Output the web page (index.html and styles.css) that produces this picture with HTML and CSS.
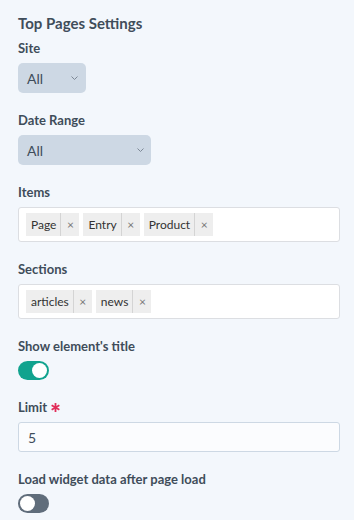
FILE: index.html
```html
<!DOCTYPE html>
<html>
<head>
<meta charset="utf-8">
<link rel="stylesheet" href="styles.css">
</head>
<body>
<div class="panel">
  <h2 class="title">Top Pages Settings</h2>

  <div class="field">
    <div class="label">Site</div>
    <div class="select site"><span>All</span><svg class="chev" width="7" height="4" viewBox="0 0 7 4"><path d="M0.5 0.5 L3.5 3.5 L6.5 0.5" fill="none" stroke="#7d8896" stroke-width="1"/></svg></div>
  </div>

  <div class="field">
    <div class="label">Date Range</div>
    <div class="select range"><span>All</span><svg class="chev" width="7" height="4" viewBox="0 0 7 4"><path d="M0.5 0.5 L3.5 3.5 L6.5 0.5" fill="none" stroke="#7d8896" stroke-width="1"/></svg></div>
  </div>

  <div class="field">
    <div class="label">Items</div>
    <div class="tagbox">
      <span class="tag"><span class="tag-text">Page</span><span class="tag-x">×</span></span>
      <span class="tag"><span class="tag-text">Entry</span><span class="tag-x">×</span></span>
      <span class="tag"><span class="tag-text">Product</span><span class="tag-x">×</span></span>
    </div>
  </div>

  <div class="field">
    <div class="label">Sections</div>
    <div class="tagbox">
      <span class="tag"><span class="tag-text">articles</span><span class="tag-x">×</span></span>
      <span class="tag"><span class="tag-text">news</span><span class="tag-x">×</span></span>
    </div>
  </div>

  <div class="field">
    <div class="label">Show element's title</div>
    <div class="switch on"><span class="knob"></span></div>
  </div>

  <div class="field">
    <div class="label">Limit <svg class="req" width="9" height="9" viewBox="0 0 10 10"><g stroke="#e12d59" stroke-width="2" stroke-linecap="butt"><path d="M5 0 V10"/><path d="M0.7 2.5 L9.3 7.5"/><path d="M0.7 7.5 L9.3 2.5"/></g></svg></div>
    <div class="input">5</div>
  </div>

  <div class="field">
    <div class="label">Load widget data after page load</div>
    <div class="switch off"><span class="knob"></span></div>
  </div>
</div>
</body>
</html>
```

FILE: styles.css
```css
html, body {
  margin: 0;
  padding: 0;
  background: #f3f7fc;
}
body {
  font-family: Lato, "Open Sans", sans-serif;
  color: #3f4d5a;
}
.panel {
  padding: 13px 14px 0 18px;
}
.title {
  margin: 0 0 6px 0;
  font-size: 15px;
  line-height: 20px;
  font-weight: 700;
  color: #3f4d5a;
}
.field {
  margin-bottom: 18px;
}
.label {
  font-size: 13px;
  line-height: 18px;
  height: 18px;
  font-weight: 700;
  color: #3f4d5a;
  margin-bottom: 6px;
  display: flex;
  align-items: center;
  gap: 4px;
}
.select {
  display: flex;
  align-items: center;
  justify-content: space-between;
  height: 30px;
  box-sizing: border-box;
  padding: 0 8px 0 9px;
  background: #cdd8e4;
  border-radius: 5px;
  font-size: 14px;
  color: #3f4d5a;
}
.site { width: 68px; }
.range { width: 133px; padding-right: 7px; }
.chev { display: block; }
.tagbox {
  display: flex;
  gap: 4px;
  align-items: center;
  height: 35px;
  box-sizing: border-box;
  padding: 5px 7px;
  background: #ffffff;
  border: 1px solid #dcdee2;
  border-radius: 3px;
}
.tag {
  display: flex;
  align-items: stretch;
  height: 23px;
  background: #eeeeee;
  font-family: Lato, "Open Sans", sans-serif;
  font-size: 12px;
  color: #333;
}
.tag-text {
  display: flex;
  align-items: center;
  padding: 0 4px 0 5px;
  border-right: 1px solid #d4d4d4;
}
.tag-x {
  display: flex;
  align-items: center;
  justify-content: center;
  width: 18px;
  font-size: 12px;
  color: #777;
}
.switch {
  width: 31px;
  height: 19px;
  border-radius: 10px;
  display: flex;
  align-items: center;
  padding: 0 2px;
  box-sizing: border-box;
}
.switch.on { background: #11a38e; justify-content: flex-end; }
.switch.off { background: #606d7b; justify-content: flex-start; }
.knob {
  width: 15px;
  height: 15px;
  border-radius: 50%;
  background: #fff;
}
.input {
  height: 30px;
  box-sizing: border-box;
  display: flex;
  align-items: center;
  padding: 0 9px;
  background: #fbfcfe;
  border: 1px solid #cdd8e4;
  border-radius: 3px;
  font-size: 14px;
  color: #3f4d5a;
}
.req { display: block; }
```
